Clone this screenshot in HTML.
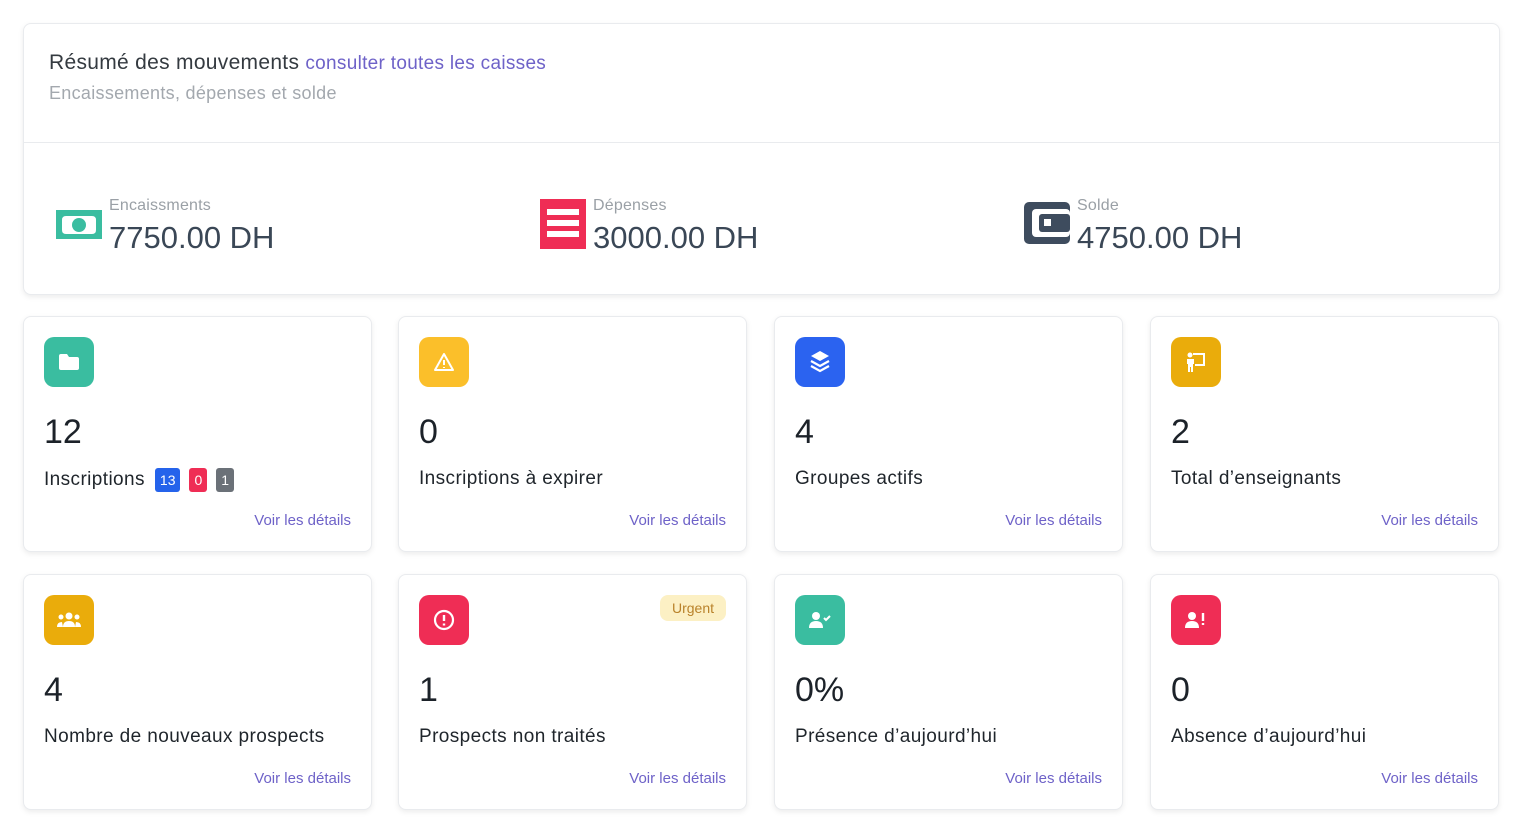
<!DOCTYPE html>
<html><head><meta charset="utf-8"><style>
*{box-sizing:border-box;margin:0;padding:0}
body{width:1525px;height:831px;background:#fff;font-family:"Liberation Sans",sans-serif;position:relative;overflow:hidden}
.card{position:absolute;background:#fff;border:1px solid #e9ebee;border-radius:8px;box-shadow:0 2px 6px rgba(0,0,0,.08)}
.top{left:23px;top:23px;width:1477px;height:272px}
.title{position:absolute;left:25px;top:27px;font-size:21px;color:#343a40;letter-spacing:.3px}
.title a{color:#6e62c8;font-size:19px;text-decoration:none}
.sub{position:absolute;left:25px;top:59px;font-size:18px;color:#a3a8ae;letter-spacing:.3px}
.hr{position:absolute;left:0;right:0;top:118px;border-top:1px solid #e9ebee}
.stat{position:absolute;top:173px}
.stat .lab{position:absolute;left:53px;top:0;font-size:16px;color:#9aa0a6;white-space:nowrap;letter-spacing:.2px}
.stat .val{position:absolute;left:53px;top:23px;font-size:31px;color:#3a4756;white-space:nowrap}
.stat svg{position:absolute;left:0;top:2px}
.sm{width:349px;height:236px}
.ic{position:absolute;left:20px;top:20px;width:50px;height:50px;border-radius:10px;display:flex;align-items:center;justify-content:center}
.num{position:absolute;left:20px;top:96px;font-size:34px;color:#1c2229}
.lbl{position:absolute;left:20px;top:151px;font-size:19px;color:#1f252b;white-space:nowrap;display:flex;align-items:center;letter-spacing:.4px}
.b{display:inline-block;color:#fff;font-size:14px;padding:3px 5px;border-radius:3px;margin-left:9px;line-height:18px;letter-spacing:0}
.det{position:absolute;right:20px;top:195px;font-size:15px;color:#6e62c8}
.urg{position:absolute;right:20px;top:20px;background:#fcf0c4;color:#b9822a;font-size:14px;padding:5px 12px;border-radius:8px}
</style></head><body>
<div class="card top">
 <div class="title">Résumé des mouvements <a>consulter toutes les caisses</a></div>
 <div class="sub">Encaissements, dépenses et solde</div>
 <div class="hr"></div>
 <div class="stat" style="left:32px">
  <svg width="46" height="40" viewBox="0 0 46 40"><rect x="0" y="11" width="46" height="30" fill="#3abda0"/><path d="M6 21q0-4 4-4h26q4 0 4 4v10q0 4-4 4H10q-4 0-4-4z" fill="#fff"/><circle cx="23" cy="26" r="7" fill="#3abda0"/></svg>
  <div class="lab">Encaissments</div><div class="val">7750.00 DH</div></div>
 <div class="stat" style="left:516px">
  <svg width="46" height="50" viewBox="0 0 46 50"><path d="M0 0h46v50H0z" fill="#ef2d55"/><rect x="7" y="10" width="32" height="6" fill="#fff"/><rect x="7" y="21" width="32" height="6" fill="#fff"/><rect x="7" y="32" width="32" height="6" fill="#fff"/></svg>
  <div class="lab">Dépenses</div><div class="val">3000.00 DH</div></div>
 <div class="stat" style="left:1000px">
  <svg width="46" height="46" viewBox="0 0 46 46"><rect x="0" y="3" width="46" height="42" rx="5" fill="#3e4c5e"/><rect x="8" y="10" width="38" height="28" rx="4" fill="#fff"/><rect x="15" y="15" width="31" height="18" rx="3" fill="#3e4c5e"/><rect x="20" y="20" width="7" height="7" fill="#fff"/></svg>
  <div class="lab">Solde</div><div class="val">4750.00 DH</div></div>
</div>

<div class="card sm" style="left:23px;top:316px"><div class="ic" style="background:#3abda0"><svg width="22" height="18" viewBox="0 0 22 18"><path d="M1 3q0-2 2-2h6l2 3h8q2 0 2 2v9q0 2-2 2H3q-2 0-2-2z" fill="#fff"/></svg></div>
<div class="num">12</div><div class="lbl">Inscriptions <span class="b" style="background:#2563eb;margin-left:10px">13</span><span class="b" style="background:#ef2d55">0</span><span class="b" style="background:#6b7178">1</span></div><div class="det">Voir les détails</div></div>
<div class="card sm" style="left:398px;top:316px"><div class="ic" style="background:#fbbf2a"><svg width="22" height="20" viewBox="0 0 22 20"><path d="M11 2L20 18H2z" fill="none" stroke="#fff" stroke-width="2" stroke-linejoin="round"/><path d="M11 8v5M11 15v1" stroke="#fff" stroke-width="2"/></svg></div>
<div class="num">0</div><div class="lbl">Inscriptions à expirer</div><div class="det">Voir les détails</div></div>
<div class="card sm" style="left:774px;top:316px"><div class="ic" style="background:#2b63f0"><svg width="22" height="24" viewBox="0 0 22 24"><path d="M11 1l9 5-9 5-9-5z" fill="#fff"/><path d="M2 11l9 5 9-5M2 16l9 5 9-5" fill="none" stroke="#fff" stroke-width="2.2"/></svg></div>
<div class="num">4</div><div class="lbl">Groupes actifs</div><div class="det">Voir les détails</div></div>
<div class="card sm" style="left:1150px;top:316px"><div class="ic" style="background:#eaac0b"><svg width="22" height="22" viewBox="0 0 22 22"><circle cx="5" cy="4" r="2.5" fill="#fff"/><path d="M2 8h7v5H8v8H6v-5H5v5H3v-8H2z" fill="#fff"/><path d="M8 3h11v11h-9" fill="none" stroke="#fff" stroke-width="2"/></svg></div>
<div class="num">2</div><div class="lbl">Total d’enseignants</div><div class="det">Voir les détails</div></div>

<div class="card sm" style="left:23px;top:574px"><div class="ic" style="background:#eaac0b"><svg width="26" height="18" viewBox="0 0 26 18"><circle cx="13" cy="5" r="3.5" fill="#fff"/><circle cx="5" cy="6" r="2.5" fill="#fff"/><circle cx="21" cy="6" r="2.5" fill="#fff"/><path d="M7 16q0-6 6-6t6 6z M1 16q0-5 5-5l1 5z M25 16q0-5-5-5l-1 5z" fill="#fff"/></svg></div>
<div class="num">4</div><div class="lbl">Nombre de nouveaux prospects</div><div class="det">Voir les détails</div></div>
<div class="card sm" style="left:398px;top:574px"><div class="ic" style="background:#ef2d55"><svg width="22" height="22" viewBox="0 0 22 22"><circle cx="11" cy="11" r="9" fill="none" stroke="#fff" stroke-width="2.2"/><path d="M11 6v6M11 14.5v2" stroke="#fff" stroke-width="2.4"/></svg></div><div class="urg">Urgent</div>
<div class="num">1</div><div class="lbl">Prospects non traités</div><div class="det">Voir les détails</div></div>
<div class="card sm" style="left:774px;top:574px"><div class="ic" style="background:#3abda0"><svg width="24" height="18" viewBox="0 0 24 18"><circle cx="8" cy="5" r="4" fill="#fff"/><path d="M1 17q0-7 7-7t7 7z" fill="#fff"/><path d="M16 7l2 2 4-4" fill="none" stroke="#fff" stroke-width="2"/></svg></div>
<div class="num">0%</div><div class="lbl">Présence d’aujourd’hui</div><div class="det">Voir les détails</div></div>
<div class="card sm" style="left:1150px;top:574px"><div class="ic" style="background:#ef2d55"><svg width="24" height="18" viewBox="0 0 24 18"><circle cx="8" cy="5" r="4" fill="#fff"/><path d="M1 17q0-7 7-7t7 7z" fill="#fff"/><path d="M19 2v8M19 12v2" stroke="#fff" stroke-width="2.4"/></svg></div>
<div class="num">0</div><div class="lbl">Absence d’aujourd’hui</div><div class="det">Voir les détails</div></div>
</body></html>
